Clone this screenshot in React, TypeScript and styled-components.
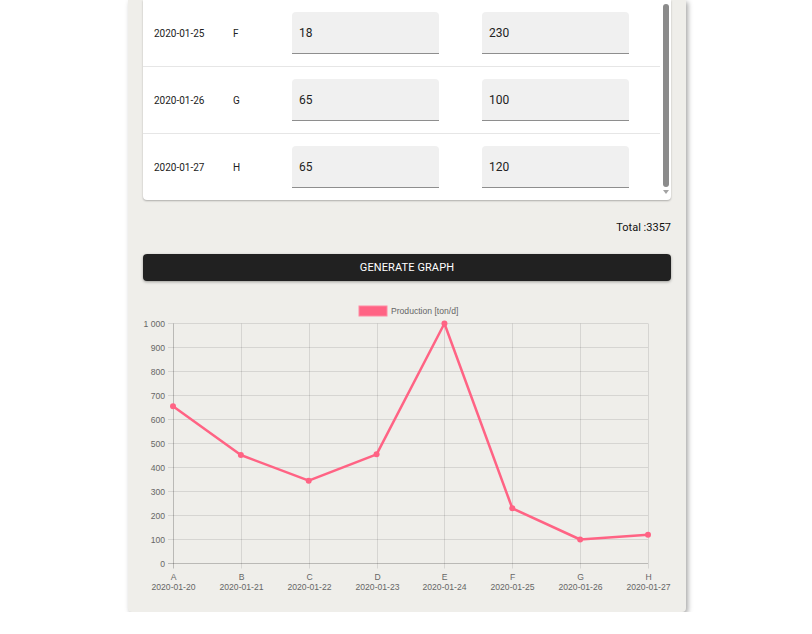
import React from "react";
import styled, { createGlobalStyle } from "styled-components";

const Global = createGlobalStyle`
  html, body { margin: 0; padding: 0; background: #ffffff; }
  body { font-family: Roboto, "Liberation Sans", Arial, sans-serif; overflow: hidden; }
  * { box-sizing: border-box; }
`;

const Card = styled.div`
  width: 558px;
  margin-left: calc(50% - 278px);
  background: #efeeea;
  padding: 0 15px 14px;
  box-shadow: 2px 2px 5px rgba(0, 0, 0, 0.35);
  border-radius: 0 0 4px 4px;
`;

const TableBox = styled.div`
  display: flex;
  background: #ffffff;
  border-radius: 0 0 4px 4px;
  box-shadow: 0 1px 2px rgba(0, 0, 0, 0.28);
`;

const Rows = styled.div`
  flex: 1;
  display: flex;
  flex-direction: column;
`;

const Row = styled.div<{ $last?: boolean }>`
  display: grid;
  grid-template-columns: 79px 59px 190px 147px;
  align-items: center;
  height: ${(p) => (p.$last ? 66 : 67)}px;
  padding-left: 11px;
  border-bottom: ${(p) => (p.$last ? "none" : "1px solid #e6e6e6")};
`;

const Cell = styled.div`
  font-family: Roboto, "Liberation Sans", Arial, sans-serif;
  font-size: 10px;
  color: #222;
`;

const Field = styled.div`
  width: 147px;
  height: 42px;
  background: #f0f0f0;
  border-radius: 4px 4px 0 0;
  border-bottom: 1px solid #8e8e8e;
  padding-left: 7px;
  display: flex;
  align-items: center;
  font-family: Roboto, "Liberation Sans", Arial, sans-serif;
  font-size: 12px;
  color: #222;
`;

const ScrollTrack = styled.div`
  width: 11px;
  display: flex;
  flex-direction: column;
  align-items: center;
  padding: 4px 1px 0 2px;
`;

const ScrollThumb = styled.div`
  width: 6px;
  height: 183px;
  border-radius: 3px;
  background: #8b8b8b;
`;

const ScrollArrow = styled.div`
  margin-top: 3px;
  width: 0;
  height: 0;
  border-left: 3px solid transparent;
  border-right: 3px solid transparent;
  border-top: 4px solid #a3a3a3;
`;

const TotalRow = styled.div`
  margin-top: 21px;
  height: 14px;
  line-height: 14px;
  text-align: right;
  font-family: Roboto, "Liberation Sans", Arial, sans-serif;
  font-size: 11px;
  color: #111;
`;

const Button = styled.button`
  display: block;
  width: 100%;
  height: 27px;
  margin-top: 19px;
  border: none;
  border-radius: 4px;
  background: #212121;
  color: #ffffff;
  font-family: Roboto, "Liberation Sans", Arial, sans-serif;
  font-size: 11px;
  letter-spacing: 0.1px;
  box-shadow: 0 1px 3px rgba(0, 0, 0, 0.35);
  padding: 0;
`;

const ChartBox = styled.div`
  margin-top: 17px;
  height: 300px;
`;

const labels = ["A", "B", "C", "D", "E", "F", "G", "H"];
const dates = [
  "2020-01-20",
  "2020-01-21",
  "2020-01-22",
  "2020-01-23",
  "2020-01-24",
  "2020-01-25",
  "2020-01-26",
  "2020-01-27",
];
const values = [655, 452, 345, 455, 1000, 230, 100, 120];

const tableRows = [
  { date: "2020-01-25", code: "F", a: "18", b: "230" },
  { date: "2020-01-26", code: "G", a: "65", b: "100" },
  { date: "2020-01-27", code: "H", a: "65", b: "120" },
];

function Chart() {
  const left = 30;
  const right = 505;
  const y0 = 265.5;
  const yTop = 25.5;
  const step = (right - left) / 7;
  const yOf = (v: number) => y0 - ((y0 - yTop) * v) / 1000;
  const ticks = [0, 100, 200, 300, 400, 500, 600, 700, 800, 900, 1000];
  const pts = values.map((v, i) => [left + i * step, yOf(v)]);
  const font = "'Liberation Sans', Arial, sans-serif";
  const fs = "8.6";
  return (
    <svg width="528" height="300" viewBox="0 0 528 300">
      <rect x="216" y="8" width="28" height="10" fill="#ff6384" stroke="#ff8aa2" strokeWidth="1" />
      <text x="248" y="16" fontFamily={font} fontSize={fs} fill="#666">
        Production [ton/d]
      </text>
      {ticks.map((t) => (
        <g key={t}>
          <line
            x1={left - 5}
            x2={right}
            y1={yOf(t)}
            y2={yOf(t)}
            stroke={t === 0 ? "rgba(0,0,0,0.22)" : "rgba(0,0,0,0.1)"}
            strokeWidth="1"
          />
          <text x="22" y={yOf(t) + 3} fontFamily={font} fontSize={fs} fill="#666" textAnchor="end">
            {t === 1000 ? "1 000" : String(t)}
          </text>
        </g>
      ))}
      {labels.map((l, i) => {
        const x = Math.round(left + i * step) + 0.5;
        return (
          <g key={l}>
            <line
              x1={x}
              x2={x}
              y1={yTop}
              y2={y0 + 5}
              stroke={i === 0 ? "rgba(0,0,0,0.22)" : "rgba(0,0,0,0.1)"}
              strokeWidth="1"
            />
            <text x={x} y="281.5" fontFamily={font} fontSize={fs} fill="#666" textAnchor="middle">
              {l}
            </text>
            <text x={x} y="292" fontFamily={font} fontSize={fs} fill="#666" textAnchor="middle">
              {dates[i]}
            </text>
          </g>
        );
      })}
      <polyline
        points={pts.map((p) => p.join(",")).join(" ")}
        fill="none"
        stroke="#ff6384"
        strokeWidth="2.5"
        strokeLinejoin="round"
      />
      {pts.map((p, i) => (
        <circle key={i} cx={p[0]} cy={p[1]} r="3" fill="#ff6384" />
      ))}
    </svg>
  );
}

export default function App() {
  const total = 3357;
  return (
    <>
      <Global />
      <Card>
        <TableBox>
          <Rows>
            {tableRows.map((r, i) => (
              <Row key={r.code} $last={i === tableRows.length - 1}>
                <Cell>{r.date}</Cell>
                <Cell>{r.code}</Cell>
                <Field>{r.a}</Field>
                <Field>{r.b}</Field>
              </Row>
            ))}
          </Rows>
          <ScrollTrack>
            <ScrollThumb />
            <ScrollArrow />
          </ScrollTrack>
        </TableBox>
        <TotalRow>Total :{total}</TotalRow>
        <Button>GENERATE GRAPH</Button>
        <ChartBox>
          <Chart />
        </ChartBox>
      </Card>
    </>
  );
}
